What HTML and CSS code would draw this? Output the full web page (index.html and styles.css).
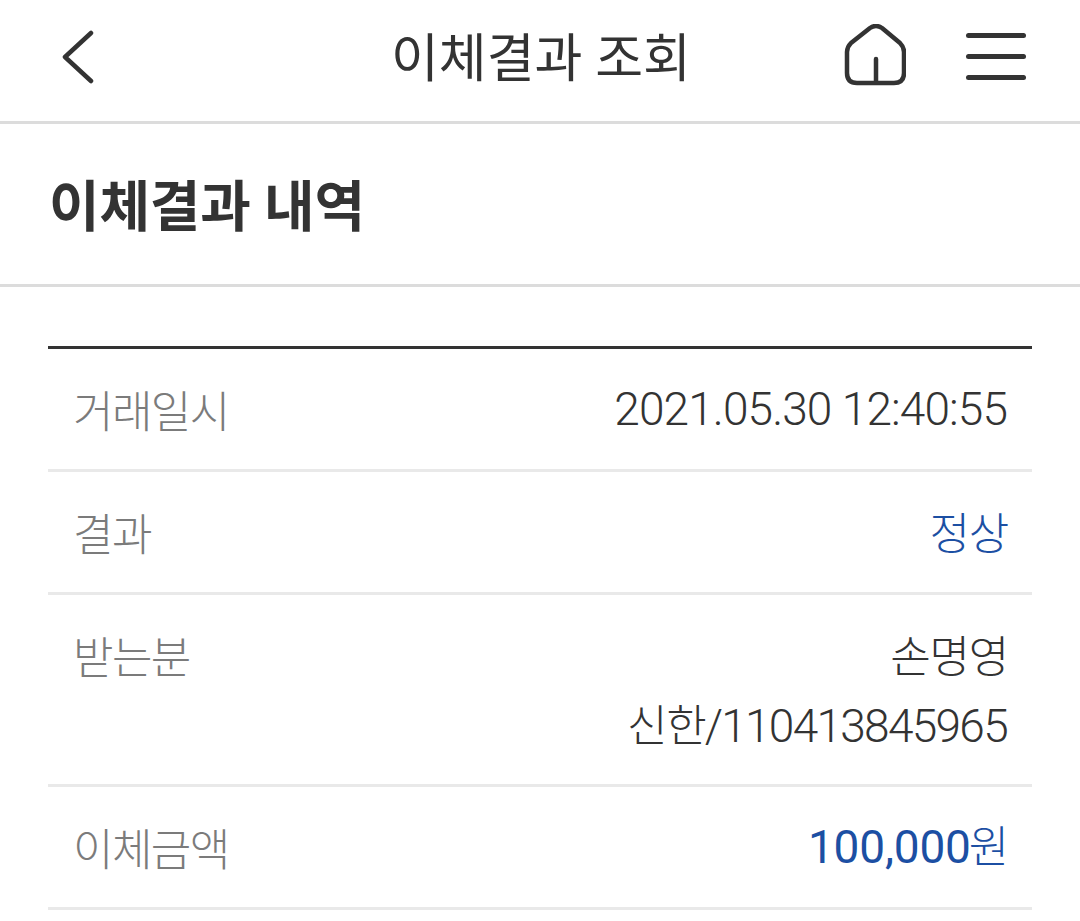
FILE: index.html
```html
<!DOCTYPE html>
<html lang="ko">
<head>
  <meta charset="UTF-8" />
  <title>이체결과 조회</title>
  <link rel="stylesheet" href="styles.css">
</head>
<body>

<header class="topbar">
  <svg class="back-icon" width="36" height="56" viewBox="0 0 36 56">
    <path d="M31 5 L5 29 L31 53" />
  </svg>
  <h1 class="topbar-title">이체결과 조회</h1>
  <div class="topbar-icons">
    <svg class="home-icon" width="62" height="64" viewBox="0 0 62 64">
      <path d="M26 4 Q32 0 38 4 L56 19 Q60 23 60 28 L60 49 Q60 59 50 59 L13 59 Q3 59 3 49 L3 28 Q3 23 7 19 Z M32 35 L32 59" />
    </svg>
    <div class="menu-icon">
      <span></span>
      <span></span>
      <span></span>
    </div>
  </div>
</header>

<section class="section-head">
  <h2>이체결과 내역</h2>
</section>

<div class="result-table">
  <div class="row">
    <div class="label">거래일시</div>
    <div class="value">2021.05.30 12:40:55</div>
  </div>
  <div class="row">
    <div class="label">결과</div>
    <div class="value blue status"><span class="hangul">정상</span></div>
  </div>
  <div class="row row-tall">
    <div class="label">받는분</div>
    <div class="value"><span class="hangul">손명영</span><br><span class="hangul">신한</span><span class="account">/110413845965</span></div>
  </div>
  <div class="row">
    <div class="label">이체금액</div>
    <div class="value blue"><span class="amount">100,000</span><span class="hangul">원</span></div>
  </div>
</div>

</body>
</html>
```

FILE: styles.css
```css
body {
  margin: 0;
  background: #fff;
  font-family: "Roboto", "Noto Sans CJK KR", sans-serif;
  color: #333;
}
.topbar {
  height: 111px;
  padding: 0 54px 10px 60px;
  border-bottom: 3px solid #dcdcdc;
  display: flex;
  align-items: center;
  justify-content: space-between;
  position: relative;
}
.back-icon path {
  fill: none;
  stroke: #333;
  stroke-width: 4.5;
  stroke-linecap: round;
  stroke-linejoin: round;
}
.topbar-title {
  position: absolute;
  left: 2px;
  right: 0;
  margin: 0;
  padding-bottom: 2px;
  text-align: center;
  font-size: 52px;
  font-weight: 400;
}
.topbar-icons {
  display: flex;
  align-items: center;
  gap: 60px;
}
.home-icon path {
  fill: none;
  stroke: #333;
  stroke-width: 4.5;
  stroke-linejoin: round;
  stroke-linecap: round;
}
.menu-icon {
  width: 60px;
  display: flex;
  flex-direction: column;
  gap: 16px;
  margin-top: 2px;
}
.menu-icon span {
  height: 5px;
  background: #333;
  border-radius: 3px;
}
.section-head {
  height: 156px;
  padding: 0 0 4px 49px;
  border-bottom: 3px solid #dcdcdc;
  display: flex;
  align-items: center;
}
.section-head h2 {
  margin: 0;
  font-size: 55px;
  font-weight: 700;
  letter-spacing: -0.2px;
}
.result-table {
  margin: 59px 48px 0;
  border-top: 3px solid #333;
}
.row {
  display: flex;
  justify-content: space-between;
  height: 120px;
  align-items: center;
  padding: 0 25px;
  border-bottom: 3px solid #e9e9e9;
  font-size: 46px;
  letter-spacing: -0.9px;
  font-weight: 300;
}
.row-tall {
  height: 192px;
  align-items: flex-start;
  padding-top: 28px;
  box-sizing: border-box;
}
.label {
  color: #7b7b7b;
  font-size: 44px;
  letter-spacing: -1.6px;
}
.value {
  text-align: right;
  line-height: 68px;
  white-space: nowrap;
}
.status {
  margin-top: 5px;
}
.hangul {
  font-size: 44px;
  letter-spacing: -1.2px;
  margin-right: -1px;
}
.account {
  letter-spacing: -1.7px;
}
.blue {
  color: #1c4fa3;
}
.amount {
  font-weight: 400;
  letter-spacing: -0.2px;
  margin-right: -2px;
}
```
